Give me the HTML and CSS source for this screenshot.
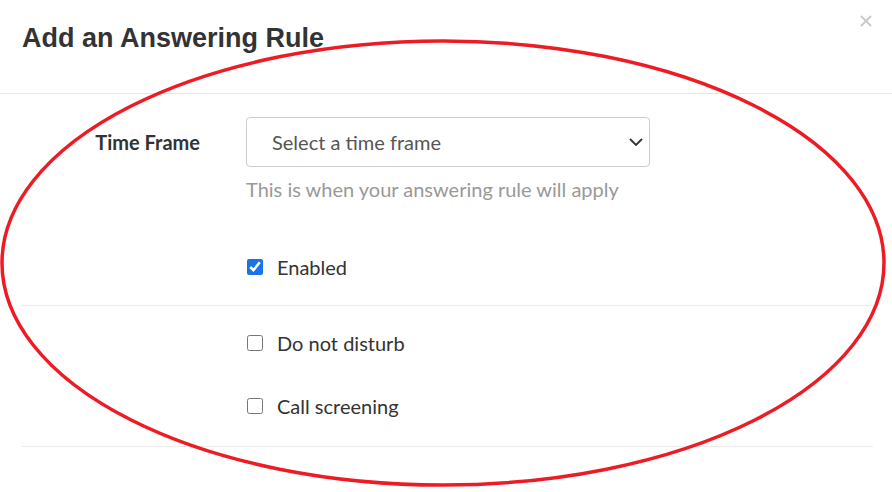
FILE: index.html
```html
<!DOCTYPE html>
<html lang="en">
<head>
    <meta charset="UTF-8">
    <meta name="viewport" content="width=device-width, initial-scale=1.0">
    <title>Add an Answering Rule</title>
    <link rel="stylesheet" href="styles.css">
</head>
<body>
    <div class="modal">
        <div class="modal-header">
            <h1>Add an Answering Rule</h1>
            <svg class="close" width="12" height="12" viewBox="0 0 12 12"><path d="M1 1 L11 11 M11 1 L1 11" stroke="#c8c8c8" stroke-width="1.8"/></svg>
        </div>
        <div class="modal-body">
            <div class="form-row">
                <label class="row-label" for="timeframe">Time Frame</label>
                <div class="row-field">
                    <div class="select-wrap">
                        <select id="timeframe">
                            <option>Select a time frame</option>
                        </select>
                        <svg class="chevron" width="14" height="8" viewBox="0 0 14 8"><path d="M1 1 L7 7 L13 1" fill="none" stroke="#333" stroke-width="1.8"/></svg>
                    </div>
                    <p class="help">This is when your answering rule will apply</p>
                    <label class="check check-first"><input type="checkbox" checked> Enabled</label>
                </div>
            </div>
            <div class="section">
                <div class="row-field offset">
                    <label class="check"><input type="checkbox"> Do not disturb</label>
                    <label class="check check-gap"><input type="checkbox"> Call screening</label>
                </div>
            </div>
        </div>
        <svg class="annotation" width="892" height="492" viewBox="0 0 892 492"><ellipse cx="443" cy="263" rx="441" ry="222" fill="none" stroke="#ed1c24" stroke-width="3.5"/></svg>
    </div>
</body>
</html>
```

FILE: styles.css
```css
body {
    margin: 0;
    background: #fff;
    font-family: "Source Sans Pro", Lato, "Noto Sans", sans-serif;
    color: #333;
}
.modal {
    position: relative;
    width: 892px;
    height: 492px;
    overflow: hidden;
}
.modal-header {
    height: 93px;
    border-bottom: 1px solid #e5e5e5;
    padding: 0 20px 0 22px;
    display: flex;
    align-items: flex-start;
    justify-content: space-between;
}
.modal-header h1 {
    margin: 23px 0 0;
    font-family: "Liberation Sans", Arial, sans-serif;
    font-size: 27px;
    font-weight: bold;
    color: #333;
}
.close {
    margin-top: 15px;
}
.modal-body {
    padding: 0 19px 0 22px;
}
.form-row {
    display: flex;
    padding-top: 23px;
    padding-bottom: 26px;
    border-bottom: 1px solid #ececec;
}
.row-label {
    width: 178px;
    margin-right: 46px;
    text-align: right;
    font-weight: bold;
    font-size: 20px;
    line-height: 50px;
}
.row-field {
    width: 404px;
}
.offset {
    margin-left: 224px;
}
.select-wrap {
    position: relative;
}
select {
    appearance: none;
    width: 100%;
    height: 50px;
    border: 1px solid #ccc;
    border-radius: 4px;
    background: #fff;
    padding: 0 25px;
    font-family: inherit;
    font-size: 20px;
    color: #555;
}
.chevron {
    position: absolute;
    right: 7px;
    top: 21px;
}
.help {
    margin: 10px 0 0;
    font-size: 20px;
    line-height: 24px;
    color: #999;
}
.check {
    display: flex;
    align-items: center;
    font-size: 20px;
    line-height: 24px;
    color: #333;
}
.check input {
    width: 16px;
    height: 16px;
    margin: 0 14px 0 1px;
    accent-color: #1a73e8;
}
.check-first {
    margin-top: 54px;
}
.section {
    padding-top: 25px;
    padding-bottom: 28px;
    border-bottom: 1px solid #ececec;
}
.check-gap {
    margin-top: 39px;
}
.annotation {
    position: absolute;
    left: 0;
    top: 0;
    pointer-events: none;
}
```
